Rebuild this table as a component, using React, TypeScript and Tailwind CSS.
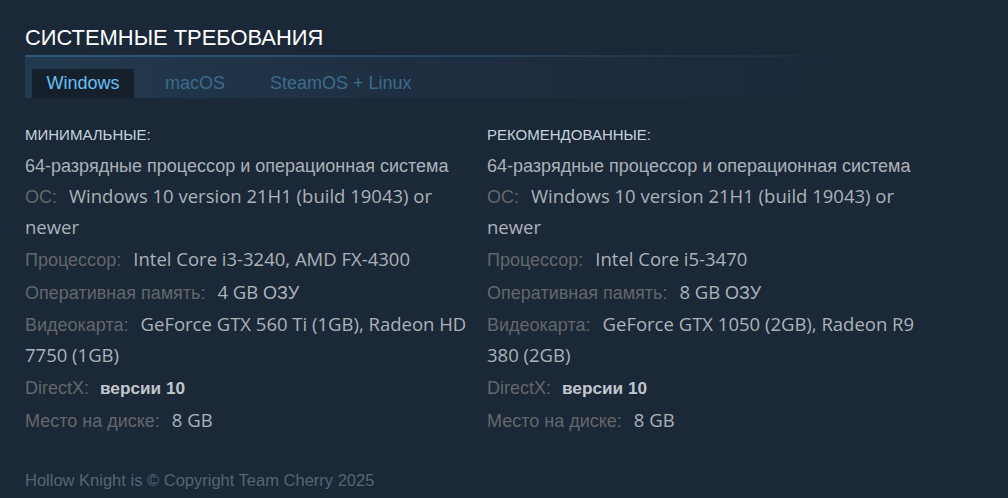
type Req = { label: string; value: string; bold?: boolean };

const minReqs: Req[] = [
  { label: "ОС:", value: "Windows 10 version 21H1 (build 19043) or newer" },
  { label: "Процессор:", value: "Intel Core i3-3240, AMD FX-4300" },
  { label: "Оперативная память:", value: "4 GB ОЗУ" },
  { label: "Видеокарта:", value: "GeForce GTX 560 Ti (1GB), Radeon HD 7750 (1GB)" },
  { label: "DirectX:", value: "версии 10", bold: true },
  { label: "Место на диске:", value: "8 GB" },
];

const recReqs: Req[] = [
  { label: "ОС:", value: "Windows 10 version 21H1 (build 19043) or newer" },
  { label: "Процессор:", value: "Intel Core i5-3470" },
  { label: "Оперативная память:", value: "8 GB ОЗУ" },
  { label: "Видеокарта:", value: "GeForce GTX 1050 (2GB), Radeon R9 380 (2GB)" },
  { label: "DirectX:", value: "версии 10", bold: true },
  { label: "Место на диске:", value: "8 GB" },
];

// Steam's font has no cyrillic, so those runs fall back to Arial
const MixedText = ({ text }: { text: string }) => {
  const parts = text.split(/([\u0400-\u04FF]+)/).filter(Boolean);
  return (
    <>
      {parts.map((p, i) =>
        /[\u0400-\u04FF]/.test(p) ? (
          <span key={i} className="font-['Liberation_Sans',Arial,sans-serif] text-[18px] leading-[20px]">{p}</span>
        ) : (
          <span key={i} className="leading-[20px]">{p}</span>
        )
      )}
    </>
  );
};

const ReqColumn = ({ title, items }: { title: string; items: Req[] }) => (
  <div className="w-[462px] pr-[12px]">
    <div className="text-[15px] uppercase text-[#c6d4df] leading-[20px] mb-[6px]">{title}</div>
    <ul className="text-[18.5px] text-[#acb2b8] font-['Open_Sans','Noto_Sans',sans-serif]">
      <li className="leading-[30px] text-[18px] font-['Liberation_Sans',Arial,sans-serif]">
        64-разрядные процессор и операционная система
      </li>
      {items.map((it, i) => (
        <li key={it.label} className={i === 0 ? "leading-[30.5px]" : "mt-[2px] leading-[30.5px]"}>
          <span className="text-[#64676b] font-['Liberation_Sans',Arial,sans-serif] text-[18px] leading-[20px]">
            {it.label}
          </span>
          {it.bold ? (
            <span className="pl-[11px] font-bold text-[17.2px] leading-[20px] text-[#c1c7cc] font-['Liberation_Sans',Arial,sans-serif]">
              {it.value}
            </span>
          ) : (
            <span className="pl-[12px] leading-[20px]">
              <MixedText text={it.value} />
            </span>
          )}
        </li>
      ))}
    </ul>
  </div>
);

export default function App() {
  return (
    <div className="min-h-screen w-full bg-[#1b2838] px-[25px] pt-[25px] font-['Liberation_Sans',Arial,sans-serif]">
      <div className="w-[857px]">
        <h2 className="text-[21.9px] leading-[26px] text-white uppercase pb-[4px]">Системные требования</h2>
        <div className="h-[2px] bg-gradient-to-r from-[#2f5c7e] via-[#284560] to-transparent" />
        <div className="h-[41px] flex items-end pl-[7px] bg-gradient-to-r from-[#223a50] via-[#1e2d3f] to-[#1b2838]">
          <div className="h-[29px] w-[102px] flex items-center justify-center bg-[#16202d] text-[#66c0f4] text-[18px]">
            Windows
          </div>
          <div className="h-[29px] pl-[31px] pr-[45px] flex items-center text-[#3d6b8c] text-[18px]">macOS</div>
          <div className="h-[29px] flex items-center text-[#3d6b8c] text-[18px]">SteamOS + Linux</div>
        </div>
      </div>
      <div className="flex mt-[27px]">
        <ReqColumn title="Минимальные:" items={minReqs} />
        <ReqColumn title="Рекомендованные:" items={recReqs} />
      </div>
      <div className="mt-[33px] text-[16.5px] text-[#556772]">Hollow Knight is © Copyright Team Cherry 2025</div>
    </div>
  );
}
